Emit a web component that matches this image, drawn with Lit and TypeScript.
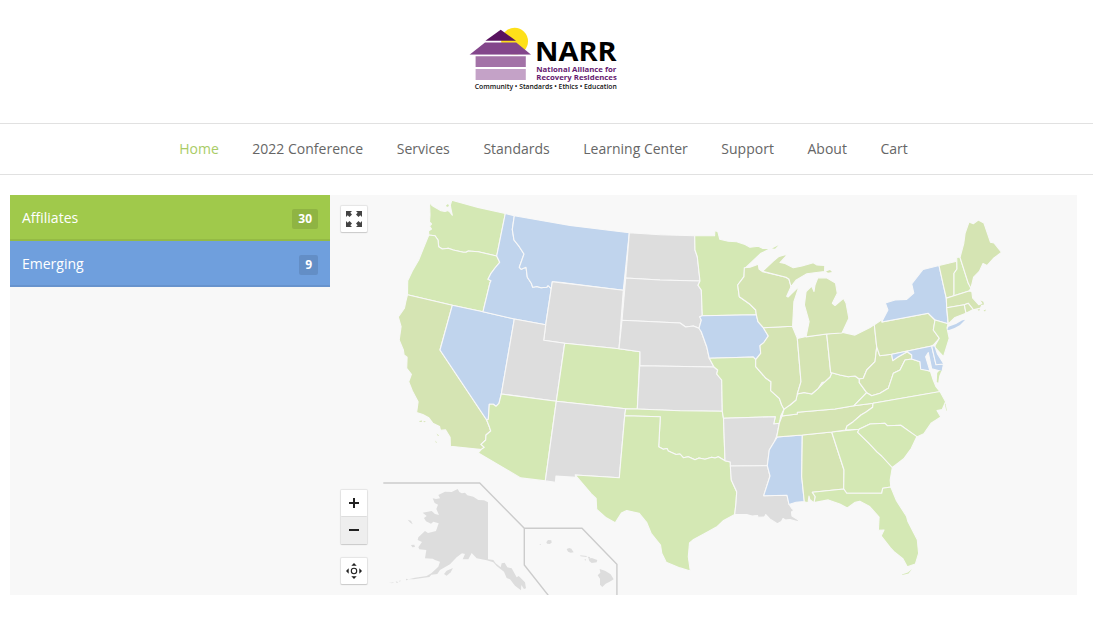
import { LitElement, html, svg, css } from "lit";
import { customElement, property, state } from "lit/decorators.js";
import { classMap } from "lit/directives/class-map.js";

type Kind = "affiliate" | "member" | "emerging" | "none";

interface Region {
	id: string;
	kind: Kind;
	points: string;
}

const REGIONS: Region[] = [
	{ id: "WA", kind: "affiliate", points: "429.5,202.5 432,205.5 436.7,208.2 441,210.8 445,211.5 448,210.5 450,212.2 452.3,215.2 451.2,210 450.3,205 451.8,200.3 478,207.4 505.3,213.5 496.7,256 478.3,251.7 468.3,251 466,252.3 463.3,252.3 453.3,250 448.3,248.3 442.3,249 438.7,246.7 438,240 435,235.7 428.8,235 428.5,231 431.5,229 429.5,226 431.5,224 429.5,222 430,215" },
	{ id: "OR", kind: "affiliate", points: "428.8,235 435,235.7 438,240 438.7,246.7 442.3,249 448.3,248.3 453.3,250 463.3,252.3 466,252.3 468.3,251 478.3,251.7 496.7,256 499.7,262.3 495,268 491,273.3 488,279.3 491,280.7 490,282.7 483,311.7 452.3,305.3 407.5,294.7 407.7,280.7 412.3,271 418.7,260 423.5,248" },
	{ id: "CA", kind: "member", points: "407.5,294.7 452.3,305.3 440,350 486.7,420 489.3,426.7 490.7,431 486,435 485.7,440 481,444.3 484.3,447.3 481.7,449.6 450.4,446.3 450.1,437.2 445.5,429.9 440.5,430.3 439.5,426.5 432.8,423.2 428.8,417.8 422.8,414.5 416.6,412.5 418.1,401.7 412.4,391 408.7,381.7 411.4,374.3 406.7,368.3 407.1,357.3 404.1,355 403.4,350 399.2,340 401.1,326.7 398.3,317 404.4,308.3 405.8,301.7" },
	{ id: "NV", kind: "emerging", points: "452.3,305.3 483,311.7 514.3,319 501.3,394 499,403.3 496,406.3 493.3,404.3 489.3,404.3 488.3,419.3 486.7,420 440,350" },
	{ id: "ID", kind: "emerging", points: "505.3,213.5 514.3,215.8 512.3,229.3 514,240 519.3,246.7 524,254 519.3,267.3 521.3,269.3 526,267.3 527.3,277.3 531.3,283.3 532.7,287.3 537,286.5 541,287.8 546.7,287.3 548,285.7 551.3,288.7 545.7,324.7 514.3,319 483,311.7 490,282.7 491,280.7 488,279.3 491,273.3 495,268 499.7,262.3 496.7,256" },
	{ id: "MT", kind: "emerging", points: "514.3,215.8 570,225.4 629.3,232.8 623.3,290.3 560,282.3 552.3,281.7 551.3,288.7 548,285.7 546.7,287.3 541,287.8 537,286.5 532.7,287.3 531.3,283.3 527.3,277.3 526,267.3 521.3,269.3 519.3,267.3 524,254 519.3,246.7 514,240 512.3,229.3" },
	{ id: "WY", kind: "none", points: "552.3,281.7 623.3,290.3 619,348.7 564.7,343.3 543.7,340.3 545.7,324.7" },
	{ id: "UT", kind: "none", points: "514.3,319 545.7,324.7 543.7,340.3 564.7,343.3 556.3,401.3 501.3,394" },
	{ id: "CO", kind: "affiliate", points: "564.7,343.3 619,348.7 640,351.7 637.3,409 625.7,408.7 556.3,401.3" },
	{ id: "AZ", kind: "affiliate", points: "501.3,394 556.3,401.3 545.3,480.9 520.7,477.9 478.3,453 481.7,449 484.3,447.3 481,444.3 485.7,440 486,435 490.7,431 489.3,426.7 486.7,420 488.3,419.3 489.3,404.3 493.3,404.3 496,406.3 499,403.3" },
	{ id: "NM", kind: "none", points: "556.3,401.3 625.7,408.7 624.7,415.7 619.3,477.7 575.3,475 576,477.4 556,476.1 555.4,482.3 545.3,480.9" },
	{ id: "ND", kind: "none", points: "629.3,232.8 660,234.8 694.7,235.8 695,250 697.3,256.7 700,281 660,280 625.7,278" },
	{ id: "SD", kind: "none", points: "625.7,278 660,280 700,281 698,285.3 701.3,290 702.3,315.7 699.7,316.7 701.3,320 699,328.3 693.3,326 685.7,327 680,323 622,320.3" },
	{ id: "NE", kind: "none", points: "622,320.3 680,323 685.7,327 693.3,326 699,328.3 701.3,331.7 706.7,346.7 709.3,358.3 714,367 640,365.7 640,351.7 619,348.7" },
	{ id: "KS", kind: "none", points: "639.7,365.7 714,367 717.7,370 716.7,374 721.7,380 722.3,411.3 680,410.8 637.3,409" },
	{ id: "OK", kind: "affiliate", points: "625.7,408.7 637.3,409 680,410.8 722.3,411.3 723.5,418.3 725,460.7 718.3,456.7 715,458 711.7,457.3 705,459.3 699,458 695,459.7 688.3,456.7 683.3,457.7 680,454 676,454.5 668.3,451 667,448.5 663.3,449.3 658.7,446.7 660.3,416.7 624.7,415.7" },
	{ id: "TX", kind: "affiliate", points: "624.7,415.7 660.3,416.7 658.7,446.7 663.3,449.3 667,448.5 668.3,451 676,454.5 680,454 683.3,457.7 688.3,456.7 695,459.7 699,458 705,459.3 711.7,457.3 715,458 718.3,456.7 725,460.7 730.3,462 731.3,480 736.7,491.7 736,503 734.7,514.5 723.6,520.5 717.3,526.5 707,532.2 693.6,539.5 689.5,543 688.3,556.7 690.3,571 680,567.9 666.2,562.2 661.8,553.3 660.5,545 651.1,533.3 646.8,522.7 639,513.2 626.7,510.6 621.4,513.1 615.2,522.8 606.3,517.8 596.7,509.3 596.1,498.5 591.3,493.8 575.3,475 619.3,477.7" },
	{ id: "MN", kind: "affiliate", points: "694.7,235.8 714.6,235.8 714.9,230 718,232 719.7,239.2 728.3,241.2 736.7,241.8 745,244.5 750,247.2 758.3,246.2 763,248.5 771,248.2 760.5,253.6 744.6,268.7 744,276.7 737.7,285 739.3,296.7 750,304.3 755.7,310 756.3,314.7 702.3,315.7 701.3,290 698,285.3 700,281 697.3,256.7 695,250" },
	{ id: "IA", kind: "emerging", points: "699.7,316.7 702.3,315.7 756.3,314.7 758,321.7 763.3,327.7 768.3,336 764,342.3 760,345.7 760.7,353.3 755.7,359.7 753.3,357 709.3,358.3 706.7,346.7 701.3,331.7 699,328.3 701.3,320" },
	{ id: "MO", kind: "affiliate", points: "709.3,358.3 753.3,357 755.7,359.7 755.7,366.7 766,378.3 771,381.7 770.7,390.7 779.3,398.3 781.7,405 784,409.3 780.7,416 779.3,423.3 773.7,424 775.3,416.7 723.5,418.3 722.3,411.3 721.7,380 716.7,374 717.7,370 714,367" },
	{ id: "AR", kind: "none", points: "723.5,418.3 775.3,416.7 773.7,424 779.3,423.3 776.7,436 774.3,441.7 769.3,450 767.3,465.7 730.3,466 730.3,462 725,460.7" },
	{ id: "LA", kind: "none", points: "730.3,466 767.3,465.7 770,476 763.7,495.7 787,495.3 789,504 791.5,508 794,510.3 791.5,512 792,516 798.5,520 798.2,521.9 790,519.5 785.5,520 783,518.6 781.5,521.5 777.3,523.7 769.8,518.9 765.8,514.6 764.5,517 758,517.3 757.5,515.5 752,516 746.7,514.6 734.7,514.5 736,503 736.7,491.7 731.3,480" },
	{ id: "MS", kind: "emerging", points: "777.3,437 802.3,435 801.7,476.7 804.3,501.5 796,502.3 789,504.5 787,495.3 763.7,495.7 770,476 767.3,465.7 769.3,450 774.3,441.7" },
	{ id: "AL", kind: "member", points: "802.3,435 831.7,432 844,470 843.7,489 812.3,492.3 815.3,496.7 814,502.9 809.8,499.5 809,496 808,502.8 804.3,501.8 801.7,476.7" },
	{ id: "GA", kind: "affiliate", points: "831.7,432 859,429.3 857.7,432.3 868.3,442.7 881.7,456 892.3,467.5 890.2,480 890.8,487 882.7,488.3 881.7,493.3 846.7,493.3 843.7,489 844,470" },
	{ id: "FL", kind: "affiliate", points: "812.3,492.3 843.7,489 846.7,493.3 881.7,493.3 882.7,488.3 890.8,487 896.5,500.8 906.6,516.5 907.9,521.5 917.3,539.8 918.6,553.3 915.4,563.9 907.3,566.7 902.9,558.7 894.7,552.3 890.5,547.8 881.1,535.9 884,530 878.4,530.3 879.1,517 869.7,506.6 859.8,501.3 855.2,502.3 847.3,508 839.8,503.9 828.3,499.9 814,502.6 815.3,496.7" },
	{ id: "TN", kind: "member", points: "782,416 797.3,414 797.3,412.3 835,409 854,405.7 873,403.3 872.7,407.3 866,412 861,415 853.3,421.7 847,426 845.7,430 831.7,432 802.3,435 776.7,437 779.3,423.3" },
	{ id: "KY", kind: "affiliate", points: "784,409.3 785,407 790,405 796,400 797.3,394 804,392.5 811.7,394 818.3,388.3 825,381.7 830,377 831.7,372.7 840,375 848.3,376.7 855,376 859.3,379 859.3,382.7 866.7,392.7 854,405.7 835,409 797.3,412.3 797.3,414 782,416" },
	{ id: "IL", kind: "member", points: "763.3,327.7 792.3,326.3 797.3,338.3 801,381.7 797.3,394 796,400 790,405 784,409.3 781.7,405 779.3,398.3 770.7,390.7 771,381.7 766,378.3 755.7,366.7 755.7,359.7 760.7,353.3 760,345.7 764,342.3 768.3,336" },
	{ id: "IN", kind: "member", points: "797.3,338.5 806,336.5 826.7,334 830.7,372.7 831.7,372.7 830,377 825,381.7 822,382.5 818.3,388.3 811.7,394 804,392.5 797.3,394 801,381.7" },
	{ id: "OH", kind: "member", points: "826.7,334 841.7,332.2 855,335.1 870,327.5 874.3,324.5 876.7,346.7 875,361.7 866.7,370 863.3,378.3 859.3,379 855,376 848.3,376.7 840,375 831.7,372.7 830.7,372.7" },
	{ id: "WV", kind: "member", points: "876.7,346.7 879.7,355.7 891.7,354.3 892.7,360 898.3,356.7 907.3,351.7 911.7,355 911.7,359 905,360 900,370 893.3,373.3 888.3,388.3 880,393.3 871.7,395.7 866.7,392.7 859.3,382.7 859.3,379 863.3,378.3 866.7,370 875,361.7" },
	{ id: "VA", kind: "affiliate", points: "854,405.7 866.7,392.7 871.7,395.7 880,393.3 888.3,388.3 893.3,373.3 900,370 905,360 911.7,359 920,361.7 920.7,368.3 930.5,371.5 933.2,380 936,386.7 940,391.7 873,403.3" },
	{ id: "NC", kind: "affiliate", points: "873,403.3 940,391.5 945.6,401.7 942.2,409.5 937,410.5 940.8,417 931,423.3 923.8,433.8 916.7,436.9 900.7,425.3 887.3,425.7 885,423.3 870,424 859,429.3 845.7,430 847,426 853.3,421.7 861,415 866,412 872.7,407.3" },
	{ id: "SC", kind: "affiliate", points: "859,429.3 870,424 885,423.3 887.3,425.7 900.7,425.3 916.9,436.6 911.2,448.6 903.7,458.8 892.3,467.5 881.7,456 877,452 868.3,442.7 857.7,432.3" },
	{ id: "WI", kind: "member", points: "744.3,267.8 750,267.2 758.3,264.3 759,269 762.7,271.7 786,277.3 789,279.3 791,286.7 786.7,296.3 788,297 799,286.3 793.9,301.7 792.6,326.3 763.3,327.7 758,321.7 756.3,314.7 755.7,310 750,304.3 739.3,296.7 737.7,285 744,276.7" },
	{ id: "MI-upper", kind: "member", points: "762.7,271.2 773.3,261.2 779,256.4 786.2,254.5 786,256 780,262.5 785,263.5 793.3,267.8 802,266 813.3,262.7 817,265 824.8,265.5 824.5,271.5 806.9,273.8 796.3,279.9 791,286.7 789,279.3 786,277.3" },
	{ id: "MI", kind: "member", points: "806,336.9 809.1,321.7 804.4,305 806.1,291.5 811.7,286 814,291.5 815,285 817.8,277.7 827,278 835.5,283 837.3,293.3 832.3,303.3 835,305.5 843.5,298.4 846,303 848.9,318.3 842,333 826.7,334" },
	{ id: "PA", kind: "member", points: "874.3,324.8 881.7,319.7 882.3,322 928.3,313.3 935,320 933.3,330 939.3,338.3 933.3,345 931.7,346 891.7,354.3 879.7,355.7 876.7,346.7" },
	{ id: "NY", kind: "emerging", points: "881.7,322 887.9,310 885.3,303 895,299.9 906.7,299.4 913.8,293.2 911.7,283.8 923,269.5 939,265.5 943.3,285 946.3,298.3 946.7,307.7 948,323.8 935,320 928.3,313.3" },
	{ id: "NJ", kind: "affiliate", points: "935,320 948,323.8 947,328 949.2,338.3 943.5,356.7 934.3,346.7 939.3,338.3 933.3,330" },
	{ id: "MD", kind: "emerging", points: "891.7,354.3 931.7,346 936,364.3 943.5,364 942,371.5 931.7,368.8 928.3,352.5 925.6,356.7 930,371 920.7,369.3 920,361.7 911.7,359 911.7,355 907.3,351.7 898.3,356.7 892.7,360.7" },
	{ id: "DE", kind: "emerging", points: "931.7,346 934.8,346 937.5,354 943.8,364 936,364.8" },
	{ id: "VT", kind: "member", points: "939,265.5 956.7,261.2 957,269 954,273.3 954,295.7 946.3,298 943.3,285" },
	{ id: "NH", kind: "affiliate", points: "956.7,257.5 960,257 968.3,283.3 971.3,287.7 969,291 954,295.7 954,273.3 957,269" },
	{ id: "ME", kind: "member", points: "960,257.5 963.8,243.3 965.1,233.3 969,222 973.3,223.7 978.3,220 983.9,223 990.5,242.3 994,243 1001.6,252.3 993.3,258.5 987,265.6 983,263.6 979.3,271.5 973.6,277.2 970.9,288.5 968.3,283.3" },
	{ id: "MA", kind: "member", points: "946.3,298.3 954,295.7 969,291 971.8,291.5 972.6,298 978.7,304.7 982.5,303.6 980.5,308 973.3,309.9 968.3,303.3 964.3,304.7 946.7,307.7" },
	{ id: "CT", kind: "member", points: "946.7,307.7 964.3,304.7 966,313.2 955,317.5 948.3,323.8" },
	{ id: "RI", kind: "member", points: "964.3,304.7 968.3,303.3 973.2,309.5 966,313.2" },
];

// Small islands are drawn without an outline, otherwise the stroke eats them up
const ISLETS: Region[] = [
	{ id: "san-juan", kind: "affiliate", points: "446,205.5 448,204 449,206 447,207" },
	{ id: "santa-cruz", kind: "member", points: "419.5,421 422,420.6 422,421.8 419.5,422" },
	{ id: "santa-rosa", kind: "member", points: "423.5,421 426,421.4 424,422.2" },
	{ id: "catalina", kind: "member", points: "436.5,433.5 439,435.5 438,436" },
	{ id: "san-clemente", kind: "member", points: "435,440.5 437,442.5 436,442.7" },
	{ id: "isle-royale", kind: "affiliate", points: "772,248.5 778.5,245.3 775,248.7" },
	{ id: "drummond", kind: "member", points: "826,271.5 830,270 832,272 828,272.7" },
	{ id: "long-island", kind: "emerging", points: "947.3,329.8 948.5,326.8 956,324 962,320.5 965.2,319.8 960,325 954.5,328 949,330" },
	{ id: "eastern-shore", kind: "affiliate", points: "937.2,373 939,371 941.6,370.2 939.2,376 938.2,382.7 936.8,382" },
	{ id: "hatteras", kind: "affiliate", points: "945.5,403.5 946.8,410.5 946.3,410.8 944.9,404" },
	{ id: "cape-cod", kind: "member", points: "980.5,300.5 983.3,301.8 984,304.5 980,305.3 982.6,303.6" },
	{ id: "marthas", kind: "member", points: "977.5,309.5 980,309 979,311" },
	{ id: "nantucket", kind: "member", points: "983.5,310.5 986,309.5 985,311.5" },
	{ id: "keys", kind: "affiliate", points: "902,574.5 908,572.5 912,569 908.5,573.5 902,575" },
];

// Alaska and Hawaii sit in an inset with its own scale
const ALASKA = [
	"308,85 318,87 330,85 325,75 345,65 365,66 383,57 388,66 395,70 405,68 412,76 430,80 445,90 462,91 474,97 474,268 490,270 497,280 512,292 515,280 524,278 532,292 545,295 560,322 566,318 585,337 588,355 582,357 574,345 573,361 555,347 540,328 530,324 522,305 500,288 490,277 470,271 440,265 425,249 415,268 398,268 405,252 396,250 380,262 360,283 330,300 322,312 304,314 298,321 250,328 236,328 255,323 290,318 304,310 325,290 330,275 315,270 308,266 285,265 289,240 268,238 265,232 276,216 263,210 265,202 285,183 294,189 318,183 326,160 310,155 303,161 288,154 282,144 290,138 278,128 305,123 315,132 327,135 319,117 324,104 314,99",
	"342,312 350,302 369,294 362,307 350,317",
	"243,225 253,224 255,231 247,232",
	"233,149 243,152 248,163 241,158",
	"228,326 236,329 228,331",
	"207,333 212,331 210,335",
	"175,336 184,338 193,335 186,340",
	"197,334 205,337 200,339",
];

const HAWAII = [
	"649,217 654,210 664,211 665,218 659,222 651,221",
	"628,224 633,221 632,225",
	"710,237 718,234 724,236 731,247 722,248 714,245",
	"750,256 771,258 769,261 752,259",
	"763,269 768,267 767,272",
	"773,260 779,261 782,266 776,266",
	"776,267 785,264 802,270 800,277 785,279 778,273",
	"809,297 825,302 842,313 851,328 839,335 827,341 817,351 810,344 810,326 803,316 811,308",
];

@customElement("narr-logo")
export class NarrLogo extends LitElement {
	static styles = css`
		:host {
			display: block;
			width: 150px;
			height: 70px;
		}

		svg {
			display: block;
		}

		text {
			font-family: "Open Sans", "Noto Sans", sans-serif;
		}

		.name {
			font-size: 26.5px;
			font-weight: 700;
			fill: #000;
		}

		.full {
			font-size: 7.8px;
			font-weight: 700;
			fill: #661a70;
		}

		.tagline {
			font-size: 6.8px;
			font-weight: 600;
			fill: #111;
		}
	`;

	render() {
		return html`
			<svg width="150" height="70" viewBox="468 26 150 70">
				<circle cx="514.6" cy="41.2" r="13.4" fill="#fee01a" />
				<path d="M500.7 29.7 516 40.7H485.4z" fill="#58135f" />
				<path d="M485 42.6h31.2l15 12.2h-61.7z" fill="#83468b" />
				<path d="M469 54.8h63v2h-63z" fill="#fff" />
				<path d="M475.6 56.2h50.2v10.9h-50.2z" fill="#a372a7" />
				<path d="M475.6 68.9h50.2v11.2h-50.2z" fill="#c4a2c7" />
				<text class="name" x="535" y="61.2" textLength="81.5" lengthAdjust="spacingAndGlyphs">NARR</text>
				<text class="full" x="536.3" y="72" textLength="80" lengthAdjust="spacingAndGlyphs">National Alliance for</text>
				<text class="full" x="536.3" y="79.9" textLength="80.5" lengthAdjust="spacingAndGlyphs">Recovery Residences</text>
				<text class="tagline" x="474.8" y="89" textLength="142" lengthAdjust="spacingAndGlyphs">Community • Standards • Ethics • Education</text>
			</svg>
		`;
	}
}

@customElement("us-map")
export class UsMap extends LitElement {
	static styles = css`
		:host {
			display: block;
		}

		svg {
			display: block;
			width: 100%;
			height: 100%;
		}

		.region {
			stroke: #f8f8f8;
			stroke-width: 1.1;
			stroke-linejoin: round;
		}

		.affiliate {
			fill: #d4e8b4;
		}

		.member {
			fill: #d5e4b3;
		}

		.emerging {
			fill: #c0d4ed;
		}

		.none {
			fill: #ddd;
		}

		.inset {
			fill: none;
			stroke: #ccc;
			stroke-width: 1.4;
		}
	`;

	render() {
		return html`
			<svg viewBox="330 195 747 400">
				${REGIONS.map((r) => svg`<polygon class="region ${r.kind}" points=${r.points} />`)}
				${ISLETS.map((r) => svg`<polygon class=${r.kind} points=${r.points} />`)}
				<g class="none" transform="translate(330 470) scale(0.33333)">
					${[...ALASKA, ...HAWAII].map((points) => svg`<polygon points=${points} />`)}
				</g>
				<path class="inset" d="M383.3 483h96.4l44.6 45.3H582l34.9 35.9V596M524.3 528.3V565l24.5 31" />
			</svg>
		`;
	}
}

@customElement("app-root")
export class AppRoot extends LitElement {
	static styles = css`
		:host {
			display: block;
			height: 617px;
			overflow: hidden;
			background: #fff;
			font-family: "Open Sans", "Noto Sans", sans-serif;
			font-size: 14px;
		}

		header {
			display: flex;
			justify-content: center;
			box-sizing: border-box;
			height: 123px;
			padding: 26px 8px 0 0;
		}

		nav {
			display: flex;
			justify-content: center;
			align-items: center;
			gap: 33.6px;
			box-sizing: border-box;
			width: 1093px;
			height: 52px;
			padding-right: 6px;
			border-top: 1px solid #e1e1e1;
			border-bottom: 1px solid #e1e1e1;
		}

		nav a {
			color: #666;
			text-decoration: none;
			line-height: 20px;
		}

		nav a.active {
			color: #a9cc66;
		}

		main {
			display: flex;
			width: 1067px;
			height: 400px;
			margin: 20px 0 0 10px;
			background: #f8f8f8;
		}

		.groups {
			width: 320px;
		}

		.group {
			display: flex;
			justify-content: space-between;
			align-items: center;
			box-sizing: border-box;
			height: 46px;
			padding: 0 12px;
			color: #fff;
			border-bottom: 2px solid rgba(0, 0, 0, 0.07);
		}

		.group.green {
			background-color: #a0c94b;
		}

		.group.blue {
			background-color: #6f9fdd;
		}

		.count {
			margin-top: 3px;
			padding: 0 6px;
			border-radius: 2px;
			background: rgba(0, 0, 0, 0.1);
			font-size: 12px;
			font-weight: 700;
			line-height: 20px;
		}

		.map {
			position: relative;
			flex: 1;
		}

		us-map {
			height: 100%;
		}

		.controls {
			position: absolute;
			inset: 11px auto 11px 11px;
			display: flex;
			flex-direction: column;
		}

		button {
			display: block;
			width: 26px;
			height: 26px;
			padding: 0;
			border: 0;
			border-radius: 1px;
			background: #fff;
			box-shadow: 0 0 1px 0.5px rgba(0, 0, 0, 0.08), 0 1px 1px rgba(0, 0, 0, 0.12);
		}

		button svg {
			display: block;
		}

		.zoom {
			margin: auto 0 14px;
			border-radius: 1px;
			box-shadow: 0 0 1px 0.5px rgba(0, 0, 0, 0.08), 0 1px 1px rgba(0, 0, 0, 0.12);
		}

		.zoom button {
			box-shadow: none;
		}

		.zoom .out {
			height: 28px;
			padding-bottom: 2px;
			background: #eee;
			border-top: 1px solid #ddd;
		}
	`;

	@property({ type: Array }) links = [
		"Home",
		"2022 Conference",
		"Services",
		"Standards",
		"Learning Center",
		"Support",
		"About",
		"Cart",
	];

	@state() private current = "Home";

	render() {
		return html`
			<header><narr-logo></narr-logo></header>
			<nav>
				${this.links.map((link) => html`
					<a href="#" class=${classMap({ active: link === this.current })}>${link}</a>
				`)}
			</nav>
			<main>
				<div class="groups">
					<div class="group green"><span>Affiliates</span><span class="count">30</span></div>
					<div class="group blue"><span>Emerging</span><span class="count">9</span></div>
				</div>
				<div class="map">
					<us-map></us-map>
					<div class="controls">
						<button aria-label="Fullscreen">
							<svg width="26" height="26" viewBox="0 0 26 26" fill="#444">
								<path d="M5 5h6L9.3 6.7 11 8.4 8.5 11 6.7 9.2 5 11z" />
								<path d="M21 5h-6l1.7 1.7L15 8.4l2.5 2.6 1.8-1.8L21 11z" />
								<path d="M5 21h6l-1.7-1.7 1.7-1.7L8.5 15l-1.8 1.8L5 15z" />
								<path d="M21 21h-6l1.7-1.7-1.7-1.7 2.5-2.6 1.8 1.8L21 15z" />
							</svg>
						</button>
						<div class="zoom">
							<button aria-label="Zoom in">
								<svg width="26" height="26" viewBox="0 0 26 26" fill="#222"><path d="M8 12h4V8h2v4h4v2h-4v4h-2v-4H8z" /></svg>
							</button>
							<button class="out" aria-label="Zoom out">
								<svg width="26" height="25" viewBox="0 0 26 25" fill="#222"><path d="M8 12h10v2H8z" /></svg>
							</button>
						</div>
						<button aria-label="Recenter">
							<svg width="26" height="26" viewBox="0 0 26 26" fill="#222">
								<circle cx="13" cy="13" r="2.7" fill="none" stroke="#222" stroke-width="1.1" />
								<path d="M13 5l2.7 2.7h-5.4zM13 21l-2.7-2.7h5.4zM5 13l2.7-2.7v5.4zM21 13l-2.7 2.7v-5.4z" />
							</svg>
						</button>
					</div>
				</div>
			</main>
		`;
	}
}
